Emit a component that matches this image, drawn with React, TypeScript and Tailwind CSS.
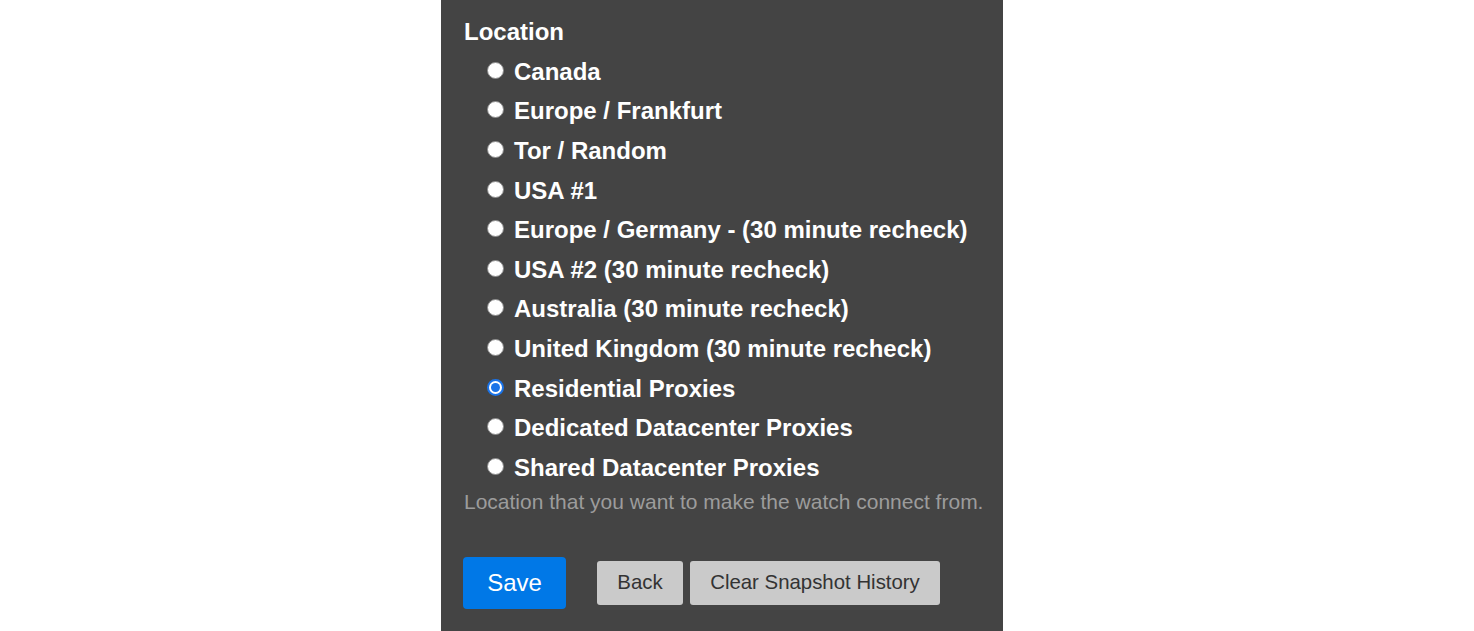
import React from "react";

const options = [
  "Canada",
  "Europe / Frankfurt",
  "Tor / Random",
  "USA #1",
  "Europe / Germany - (30 minute recheck)",
  "USA #2 (30 minute recheck)",
  "Australia (30 minute recheck)",
  "United Kingdom (30 minute recheck)",
  "Residential Proxies",
  "Dedicated Datacenter Proxies",
  "Shared Datacenter Proxies",
];

function Radio({ checked }: { checked: boolean }) {
  if (checked) {
    return (
      <span className="flex h-[17px] w-[17px] shrink-0 items-center justify-center rounded-full border-[2px] border-[#1a73e8] bg-white">
        <span className="block h-[9px] w-[9px] rounded-full bg-[#1a73e8]" />
      </span>
    );
  }
  return <span className="block h-[17px] w-[17px] shrink-0 rounded-full border border-[#8a8a8a] bg-white" />;
}

export default function App() {
  return (
    <div className="flex h-[631px] w-full bg-white pl-[441px] font-['Liberation_Sans',Arial,sans-serif]">
      <div className="flex h-full w-[562px] flex-col bg-[#444444] pl-[23px] pt-[18px]">
        <div className="h-[28px] text-[24px] font-bold leading-[28px] text-white">Location</div>
        <div className="mt-[6px] flex flex-col pl-[23px]">
          {options.map((o) => (
            <label key={o} className="flex h-[39.6px] items-center gap-[10px]">
              <span className="-mt-[3px] flex">
                <Radio checked={o === "Residential Proxies"} />
              </span>
              <span className="text-[24px] font-bold leading-[28px] text-white">{o}</span>
            </label>
          ))}
        </div>
        <div className="mt-[2px] text-[21px] leading-[24px] text-[#9c9c9c]">
          Location that you want to make the watch connect from.
        </div>
        <div className="-ml-[1px] mt-[43px] flex items-center">
          <button className="h-[52px] w-[103px] rounded-[4px] bg-[#0078e7] text-[24px] text-white">Save</button>
          <button className="ml-[31px] h-[44px] w-[86px] rounded-[3px] bg-[#cacaca] text-[20.4px] text-[#333333]">Back</button>
          <button className="ml-[7px] h-[44px] w-[250px] rounded-[3px] bg-[#cacaca] text-[20.4px] text-[#333333]">
            Clear Snapshot History
          </button>
        </div>
      </div>
    </div>
  );
}
